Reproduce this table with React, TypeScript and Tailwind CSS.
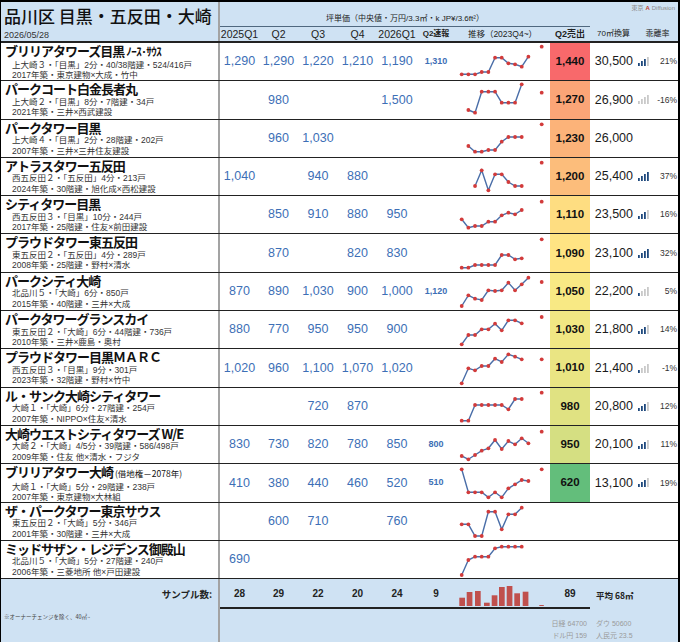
import React from 'react'

type Row = {
  name: React.ReactNode
  sub1: string
  sub2: string
  q: (string | null)[]
  spark: (number | null)[]
  dot?: number
  sale?: string
  saleBg?: string
  m70?: string
  sig?: number
  ratio?: string
}

const rows: Row[] = [
  {
    name: (
      <>
        ブリリアタワーズ目黒 <span className="text-[11px] tracking-[-0.5px]">ﾉｰｽ･ｻｳｽ</span>
      </>
    ),
    sub1: '上大崎３・「目黒」2分・40/38階建・524/416戸',
    sub2: '2017年築・東京建物×大成・竹中',
    q: ['1,290', '1,290', '1,220', '1,210', '1,190', '1,310'],
    spark: [31.3, 31.3, 31.3, 29, 29, 14.7, 14.7, 20.3, 21.3, 23.7, 13.7],
    dot: 3.7,
    sale: '1,440', saleBg: 'bg-[#f8696b]', m70: '30,500', sig: 3, ratio: '21%',
  },
  {
    name: 'パークコート白金長者丸',
    sub1: '上大崎２・「目黒」8分・7階建・34戸',
    sub2: '2021年築・三井×西武建設',
    q: [null, '980', null, null, '1,500', null],
    spark: [null, 29, 31.7, 10.7, 10.7, 10.7, 21.7, 21.7, 21.7, 3.3],
    dot: 11.7,
    sale: '1,270', saleBg: 'bg-[#fba577]', m70: '26,900', sig: 0, ratio: '-16%',
  },
  {
    name: 'パークタワー目黒',
    sub1: '上大崎４・「目黒」2分・28階建・202戸',
    sub2: '2007年築・三井×三井住友建設',
    q: [null, '960', '1,030', null, null, null],
    spark: [null, 26, 31.7, 31.7, 30, 30, 21.7, 17, 17, 17],
    dot: 4.3,
    sale: '1,230', saleBg: 'bg-[#fcb379]', m70: '26,000',
  },
  {
    name: 'アトラスタワー五反田',
    sub1: '西五反田２・「五反田」4分・213戸',
    sub2: '2024年築・30階建・旭化成×西松建設',
    q: ['1,040', null, '940', '880', null, null],
    spark: [null, null, 28, 12.3, 32.3, 16.3, 16.3, 24, 28, 28],
    dot: 4.7,
    sale: '1,200', saleBg: 'bg-[#fcbd7b]', m70: '25,400', sig: 4, ratio: '37%',
  },
  {
    name: 'シティタワー目黒',
    sub1: '西五反田３・「目黒」10分・244戸',
    sub2: '2017年築・25階建・住友×前田建設',
    q: [null, '850', '910', '880', '950', null],
    spark: [23.3, 31.7, 30, 30, 25.7, 25.7, 19.3, 16.7, 18.3, 14],
    dot: 5.7,
    sale: '1,110', saleBg: 'bg-[#fedd81]', m70: '23,500', sig: 3, ratio: '16%',
  },
  {
    name: 'プラウドタワー東五反田',
    sub1: '東五反田２・「五反田」4分・289戸',
    sub2: '2008年築・25階建・野村×清水',
    q: [null, '870', null, '820', '830', null],
    spark: [32.7, 32.7, 30, 30, 30, 30, 20, 20, 24.3, 23.3],
    dot: 4.3,
    sale: '1,090', saleBg: 'bg-[#ffe483]', m70: '23,100', sig: 4, ratio: '32%',
  },
  {
    name: 'パークシティ大崎',
    sub1: '北品川５・「大崎」6分・850戸',
    sub2: '2015年築・40階建・三井×大成',
    q: ['870', '890', '1,030', '900', '1,000', '1,120'],
    spark: [33, 22.3, 25.7, 27, 17.3, 18, 17.3, 9.7, 17.3, 11.3, 4.7],
    dot: 9,
    sale: '1,050', saleBg: 'bg-[#f8e984]', m70: '22,200', sig: 1, ratio: '5%',
  },
  {
    name: 'パークタワーグランスカイ',
    sub1: '東五反田２・「大崎」6分・44階建・736戸',
    sub2: '2010年築・三井×鹿島・奥村',
    q: ['880', '770', '950', '950', '900', null],
    spark: [33.3, 24, 24, 18.3, 18.3, 12.7, 19.3, 9.3, 9.3, 12.3],
    dot: 6,
    sale: '1,030', saleBg: 'bg-[#f1e783]', m70: '21,800', sig: 3, ratio: '14%',
  },
  {
    name: 'プラウドタワー目黒ＭＡＲＣ',
    sub1: '西五反田３・「目黒」9分・301戸',
    sub2: '2023年築・32階建・野村×竹中',
    q: ['1,020', '960', '1,100', '1,070', '1,020', null],
    spark: [33.3, 18.3, 20.3, 16, 16, 8.7, 12, 4.3, 6.7, 9.3],
    dot: 9.3,
    sale: '1,010', saleBg: 'bg-[#eae583]', m70: '21,400', sig: 1, ratio: '-1%',
  },
  {
    name: 'ル・サンク大崎シティタワー',
    sub1: '大崎１・「大崎」6分・27階建・254戸',
    sub2: '2007年築・NIPPO×住友×清水',
    q: [null, null, '720', '870', null, null],
    spark: [32.7, 32.7, 17, 17, 17, 17, 17, 21.3, 11, 11],
    dot: 4.7,
    sale: '980', saleBg: 'bg-[#e0e282]', m70: '20,800', sig: 3, ratio: '12%',
  },
  {
    name: '大崎ウエストシティタワーズ W/E',
    sub1: '大崎２・「大崎」4/5分・39階建・586/498戸',
    sub2: '2009年築・住友 他×清水・フジタ',
    q: ['830', '730', '820', '780', '850', '800'],
    spark: [30, 33.3, 29, 24.7, 22.3, 14, 23, 15, 18.3, 12.3, 17.3],
    dot: 5.7,
    sale: '950', saleBg: 'bg-[#d5df82]', m70: '20,100', sig: 3, ratio: '11%',
  },
  {
    name: (
      <>
        ブリリアタワー大崎 <span className="text-[8.5px] font-normal tracking-normal">(借地権－2078年)</span>
      </>
    ),
    sub1: '大崎１・「大崎」5分・29階建・238戸',
    sub2: '2007年築・東京建物×大林組',
    q: ['410', '380', '440', '460', '520', '510'],
    spark: [5.3, 28.3, 28.3, 28.3, 33.3, 28.3, 33.3, 24.3, 20.3, 16, 17],
    dot: 5.3,
    sale: '620', saleBg: 'bg-[#63be7b]', m70: '13,100', sig: 3, ratio: '19%',
  },
  {
    name: 'ザ・パークタワー東京サウス',
    sub1: '東五反田２・「大崎」5分・346戸',
    sub2: '2001年築・30階建・三井×大成',
    q: [null, '600', '710', null, '760', null],
    spark: [21.3, 21.3, 33, 33, 8.7, 8.7, 26.3, 11.3, 11.3, 4.7],
  },
  {
    name: 'ミッドサザン・レジデンス御殿山',
    sub1: '北品川５・「大崎」5分・27階建・240戸',
    sub2: '2006年築・三菱地所 他×戸田建設',
    q: ['690', null, null, null, null, null],
    spark: [34, 19, 15.7, 15.7, 15.7, 7.3, 5.7, 5.7, 5.7, 5.7],
  },
]

const qWidths = ['w-[39px]', 'w-[39px]', 'w-[40px]', 'w-[39px]', 'w-[40px]', 'w-[38px]']
const qLabels = ['2025Q1', 'Q2', 'Q3', 'Q4', '2026Q1']
const samples = ['28', '29', '22', '20', '24', '9']

// footer histogram: [x, height]
const bars: [number, number][] = [
  [4.3, 8.3], [11.7, 14], [20, 15], [29, 3.3], [36.7, 10.7],
  [44, 19], [51.7, 20], [59.3, 12.7], [67.7, 14.3],
]

function Spark({ pts, dot }: { pts: (number | null)[]; dot?: number }) {
  const xy = pts
    .map((y, i) => (y == null ? null : [6.7 + i * 6.67, y]))
    .filter((p): p is number[] => p !== null)
  return (
    <svg width="95" height="37" viewBox="0 0 95 37" className="block overflow-visible">
      <polyline
        points={xy.map((p) => p.join(',')).join(' ')}
        fill="none"
        stroke="#4a6ea8"
        strokeWidth="1.4"
      />
      {xy.map(([x, y], i) => (
        <circle key={i} cx={x} cy={y} r="1.9" fill="#d23b3b" />
      ))}
      {dot != null && <circle cx="86.7" cy={dot} r="1.9" fill="#d23b3b" />}
    </svg>
  )
}

function Signal({ n }: { n: number }) {
  return (
    <svg width="12" height="9" viewBox="0 0 12 9" className="block">
      {[0, 1, 2, 3].map((i) => (
        <rect
          key={i}
          x={i * 3}
          y={9 - (3 + i * 2)}
          width="1.8"
          height={3 + i * 2}
          fill={i < n ? '#1f497d' : '#c9c9c9'}
        />
      ))}
    </svg>
  )
}

export default function App() {
  return (
    <div className="w-[680px] h-[642px] overflow-hidden border-t-2 border-l border-r-2 border-black bg-white text-[#222] font-['Liberation_Sans','Noto_Sans_CJK_JP',sans-serif]">
      {/* header */}
      <div className="flex h-[41px] border-b-2 border-[#222] bg-[#cfe2f3]">
        <div className="w-[219px] shrink-0 border-r-2 border-[#a3a3a3] flex flex-col">
          <div className="pl-[3px] pt-[2px] h-[27px] text-[17px] leading-[24px] font-medium text-[#111] whitespace-nowrap font-['Noto_Sans_CJK_JP',sans-serif]">
            品川区 目黒・五反田・大崎
          </div>
          <div className="pl-[3px] text-[9px] leading-[12px] text-[#333]">2026/05/28</div>
        </div>
        <div className="flex-1 flex flex-col">
          <div className="flex h-[25px]">
            <div className="w-[370px] border-b-[1.5px] border-[#50687f] flex items-end justify-center pb-[3px] text-[8px] leading-none whitespace-nowrap text-[#222]">
              坪単価（中央値・万円/3.3㎡・k JP¥/3.6ft²）
            </div>
            <div className="flex-1 flex justify-end pr-[3px] pt-[3px] text-[6px] leading-none text-[#8a8a8a] whitespace-nowrap">
              東京 <span className="px-[2px] font-bold text-[#c0392b]">A</span>Diffusion
            </div>
          </div>
          <div className="flex h-[14px] items-center text-[10.5px] leading-none whitespace-nowrap">
            {qLabels.map((l, i) => (
              <div key={l} className={`${qWidths[i]} text-center`}>
                {l}
              </div>
            ))}
            <div className="w-[38px] text-center text-[8px] font-bold">Q2速報</div>
            <div className="w-[95px] text-center text-[8.5px]">推移（2023Q4~）</div>
            <div className="w-[40px] text-center text-[9px] font-bold">Q2売出</div>
            <div className="w-[47px] text-center text-[8px]">70㎡換算</div>
            <div className="flex-1 text-center text-[8px]">乖離率</div>
          </div>
        </div>
      </div>

      {/* rows */}
      {rows.map((r, idx) => (
        <div key={idx} className="flex h-[38.3px] border-b-[1.5px] border-[#222]">
          <div className="w-[219px] shrink-0 border-r-2 border-[#a3a3a3] whitespace-nowrap">
            <div className="pl-[4px] text-[13px] leading-[15.5px] font-bold text-[#111] tracking-[-1px] font-['Noto_Sans_CJK_JP',sans-serif]">
              {r.name}
            </div>
            <div className="pl-[11px] text-[8.5px] leading-[10.5px] text-[#333]">{r.sub1}</div>
            <div className="pl-[11px] text-[8.5px] leading-[10.5px] text-[#333]">{r.sub2}</div>
          </div>
          {r.q.slice(0, 5).map((v, i) => (
            <div
              key={i}
              className={`${qWidths[i]} flex items-center justify-center text-[12.5px] text-[#3d6fb6]`}
            >
              {v}
            </div>
          ))}
          <div className="w-[38px] flex items-center justify-center text-[9px] font-bold text-[#3d6fb6]">
            {r.q[5]}
          </div>
          <div className="w-[95px] flex items-center">
            <Spark pts={r.spark} dot={r.dot} />
          </div>
          <div className={`w-[40px] flex items-center justify-center text-[11.5px] font-bold text-[#111] ${r.saleBg ?? ''}`}>
            {r.sale}
          </div>
          <div className="w-[47px] flex items-center justify-end pr-[4px] text-[12.5px] text-[#1a1a1a]">
            {r.m70}
          </div>
          <div className="w-[15px] flex items-center justify-start pl-[1px]">
            {r.sig != null && <Signal n={r.sig} />}
          </div>
          <div className="flex-1 flex items-center justify-end pr-[1px] text-[8.5px] text-[#333]">
            {r.ratio}
          </div>
        </div>
      ))}

      {/* footer */}
      <div className="flex h-[63px] bg-[#cfe2f3]">
        <div className="w-[219px] shrink-0 border-r-2 border-[#a3a3a3] flex flex-col">
          <div className="h-[30px] flex items-center justify-end pr-[6px] text-[9.5px] font-bold font-['Noto_Sans_CJK_JP',sans-serif]">
            サンプル数:
          </div>
          <div className="pl-[3px] pt-[6px] text-[5.5px] leading-none text-[#444] whitespace-nowrap font-['Noto_Sans_CJK_JP',sans-serif]">
            ※オーナーチェンジを除く、40㎡~
          </div>
        </div>
        <div className="flex-1 flex flex-col">
          <div className="flex">
            <div className="w-[370px] h-[30px] flex border-b-2 border-[#222] text-[10px] font-bold">
              {samples.map((s, i) => (
                <div key={i} className={`${i < 5 ? qWidths[i] : 'w-[38px]'} flex items-center justify-center`}>
                  {s}
                </div>
              ))}
              <div className="w-[95px] flex items-end pb-[1px]">
                <svg width="95" height="24" viewBox="0 0 95 24" className="block">
                  {bars.map(([x, h], i) => (
                    <rect key={i} x={x} y={24 - h} width="5.7" height={h} fill="#c0504d" />
                  ))}
                  <rect x="84.3" y="23" width="4.5" height="1" fill="#c0504d" />
                </svg>
              </div>
              <div className="w-[40px] flex items-center justify-center">89</div>
            </div>
            <div className="pl-[6px] pt-[12px] text-[8.5px] font-bold leading-none whitespace-nowrap font-['Noto_Sans_CJK_JP',sans-serif]">
              平均 68㎡
            </div>
          </div>
          <div className="grid grid-cols-[370px_1fr] pt-[9px] text-[7px] leading-[12px] text-[#9a9a9a] whitespace-nowrap">
            <div className="text-right pr-[3px]">日経 64700</div>
            <div className="pl-[6px]">ダウ 50600</div>
            <div className="text-right pr-[3px]">ドル円 159</div>
            <div className="pl-[6px]">人民元 23.5</div>
          </div>
        </div>
      </div>
    </div>
  )
}
